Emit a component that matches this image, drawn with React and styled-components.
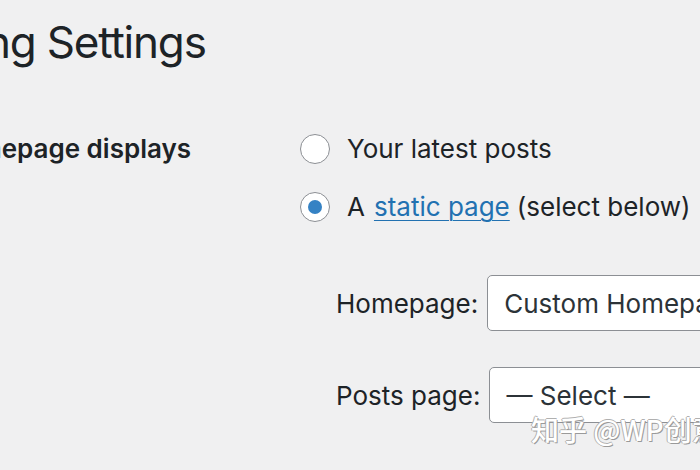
import React from 'react';
import styled, { createGlobalStyle } from 'styled-components';

const GlobalStyle = createGlobalStyle`
  html, body {
    margin: 0;
    padding: 0;
    background: #f0f0f1;
  }
  body {
    width: 700px;
    height: 470px;
    overflow: hidden;
    font-family: Inter, "Liberation Sans", Arial, sans-serif;
    color: #1d2327;
  }
`;

const Page = styled.div`
  position: relative;
  width: 700px;
  height: 470px;
  overflow: hidden;
`;

const Heading = styled.h1`
  margin: 12px 0 0 -125px;
  font-size: 44px;
  font-weight: 400;
  letter-spacing: -1.2px;
  line-height: 60px;
  white-space: nowrap;
`;

const FormRow = styled.div`
  display: flex;
  align-items: flex-start;
  margin-top: 62px;
`;

const RowLabel = styled.div`
  width: 357px;
  flex: none;
  margin-left: -57px;
  font-size: 26px;
  font-weight: 600;
  line-height: 30px;
  white-space: nowrap;
`;

const Options = styled.fieldset`
  margin: 0;
  padding: 0;
  border: none;
  display: flex;
  flex-direction: column;
  gap: 28px;
`;

const Choice = styled.label`
  display: flex;
  align-items: center;
  gap: 17px;
  font-size: 26px;
  line-height: 30px;
  white-space: nowrap;
`;

const Radio = styled.span`
  width: 30px;
  height: 30px;
  flex: none;
  box-sizing: border-box;
  border-radius: 50%;
  border: 1.5px solid #8c8f94;
  background: #fff;
  display: flex;
  align-items: center;
  justify-content: center;

  &::after {
    content: '';
    width: 14px;
    height: 14px;
    border-radius: 50%;
    background: ${p => (p.$checked ? '#3582c4' : 'transparent')};
  }
`;

const Link = styled.a`
  color: #2271b1;
  text-decoration: underline;
  text-underline-offset: 4px;
  text-decoration-thickness: 1px;
  margin: 0 7px 0 9px;
`;

const PageSelects = styled.div`
  display: flex;
  flex-direction: column;
  gap: 36px;
  margin: 53px 0 0 36px;
`;

const SelectRow = styled.div`
  display: flex;
  align-items: center;
  gap: 9px;
`;

const SelectLabel = styled.span`
  font-size: 26px;
  white-space: nowrap;
`;

const SelectBox = styled.div`
  width: 320px;
  height: 56px;
  flex: none;
  box-sizing: border-box;
  border: 1px solid #8c8f94;
  border-radius: 5px;
  background: #fff;
  padding-left: 16px;
  display: flex;
  align-items: center;
  font-size: 26px;
  color: #2c3338;
  white-space: nowrap;
`;

const Watermark = styled.div`
  position: absolute;
  left: 531px;
  top: 409px;
  font-family: "Noto Sans CJK SC", sans-serif;
  font-size: 28px;
  font-weight: 500;
  color: #fff;
  white-space: nowrap;
  text-shadow: 1px 1px 0 #9a9a9a, -1px 0 0 #b0b0b0, 0 -1px 0 #b0b0b0;
`;

export default function App() {
  return (
    <>
      <GlobalStyle />
      <Page>
        <Heading>Reading Settings</Heading>
        <FormRow>
          <RowLabel>Homepage displays</RowLabel>
          <div>
            <Options>
              <Choice>
                <Radio />
                Your latest posts
              </Choice>
              <Choice>
                <Radio $checked />
                <span>
                  A<Link href="#">static page</Link>(select below)
                </span>
              </Choice>
            </Options>
            <PageSelects>
              <SelectRow>
                <SelectLabel>Homepage:</SelectLabel>
                <SelectBox>Custom Homepage</SelectBox>
              </SelectRow>
              <SelectRow>
                <SelectLabel>Posts page:</SelectLabel>
                <SelectBox>— Select —</SelectBox>
              </SelectRow>
            </PageSelects>
          </div>
        </FormRow>
        <Watermark>知乎 @WP创意</Watermark>
      </Page>
    </>
  );
}
